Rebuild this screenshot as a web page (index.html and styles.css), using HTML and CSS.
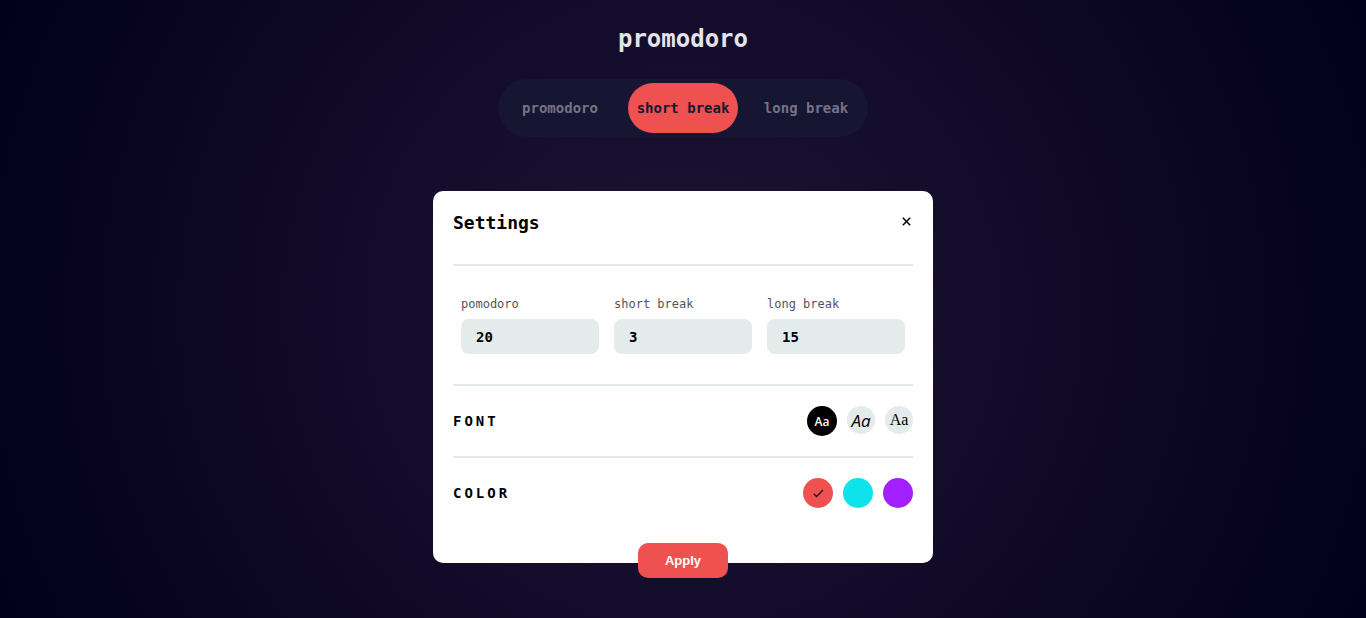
FILE: index.html
```html
<!DOCTYPE html>
<html lang="en">
<head>
<meta charset="utf-8">
<meta name="viewport" content="width=device-width, initial-scale=1">
<title>promodoro</title>
<link rel="stylesheet" href="styles.css">
</head>
<body>
<header class="header">
  <h1 class="brand">promodoro</h1>
  <nav class="tabs" aria-label="Timer mode">
    <button class="tab" type="button">promodoro</button>
    <button class="tab tab-active" type="button">short break</button>
    <button class="tab" type="button">long break</button>
  </nav>
</header>
<main>
  <form class="settings">
    <div class="settings-head">
      <h2 class="settings-title">Settings</h2>
      <button class="close" type="button" aria-label="Close">
        <svg width="9" height="9" viewBox="0 0 9 9" aria-hidden="true"><path d="M.8 .8l7.4 7.4M8.2 .8l-7.4 7.4" fill="none" stroke="#000" stroke-width="1.5"/></svg>
      </button>
    </div>
    <div class="times">
      <div class="field"><label for="pomodoro">pomodoro</label><input id="pomodoro" type="text" inputmode="numeric" value="20"></div>
      <div class="field"><label for="short">short break</label><input id="short" type="text" inputmode="numeric" value="3"></div>
      <div class="field"><label for="long">long break</label><input id="long" type="text" inputmode="numeric" value="15"></div>
    </div>
    <div class="row">
      <h3 class="row-title">FONT</h3>
      <div class="choices">
        <button class="font font-sans" type="button">Aa</button>
        <button class="font font-casual" type="button">Aa</button>
        <button class="font font-serif" type="button">Aa</button>
      </div>
    </div>
    <div class="row">
      <h3 class="row-title">COLOR</h3>
      <div class="choices">
        <button class="swatch red" type="button" aria-label="Red">
          <svg width="12" height="10" viewBox="0 0 12 10" aria-hidden="true"><path d="M1.8 5.8L4.5 8.5L11 2" fill="none" stroke="#1a1020" stroke-width="1.3"/></svg>
        </button>
        <button class="swatch cyan" type="button" aria-label="Cyan"></button>
        <button class="swatch purple" type="button" aria-label="Purple"></button>
      </div>
    </div>
    <button class="apply" type="submit">Apply</button>
  </form>
</main>
</body>
</html>
```
FILE: styles.css
```css
* {
  box-sizing: border-box;
}

body {
  margin: 0;
  min-height: 100vh;
  padding: 24px 16px 40px;
  background: radial-gradient(circle, #1f1435, #02001a);
  font-family: "DejaVu Sans Mono", monospace;
  color: #000;
}

h1,
h2,
h3 {
  margin: 0;
}

button {
  border: 0;
  padding: 0;
  font-family: inherit;
  cursor: pointer;
}

.header {
  display: flex;
  flex-direction: column;
  align-items: center;
  gap: 25px;
}

.brand {
  font-size: 24px;
  line-height: 30px;
  color: #e6e3ea;
}

.tabs {
  display: flex;
  gap: 13px;
  padding: 4px 7px;
  border-radius: 29px;
  background: #161532;
}

.tab {
  min-width: 110px;
  height: 50px;
  border-radius: 25px;
  background: transparent;
  color: #757386;
  font-size: 14px;
  font-weight: bold;
}

.tab-active {
  background: #ef5050;
  color: #161932;
}

.settings {
  display: flex;
  flex-direction: column;
  max-width: 500px;
  margin: 54px auto 0;
  padding: 0 20px;
  border-radius: 10px;
  background: #fff;
}

.settings-head {
  display: flex;
  justify-content: space-between;
  padding: 20px 0 29px;
  border-bottom: 2px solid #e3ebea;
}

.settings-title {
  font-size: 18px;
  line-height: 24px;
}

.close {
  display: grid;
  place-items: center;
  width: 13px;
  height: 20px;
  background: transparent;
}

.times {
  display: grid;
  grid-template-columns: repeat(3, 1fr);
  gap: 15px;
  padding: 30px 8px;
  border-bottom: 2px solid #e3ebea;
}

.field label {
  display: block;
  margin-bottom: 7px;
  font-size: 12px;
  line-height: 16px;
  color: #555;
}

.field input {
  display: block;
  width: 100%;
  height: 35px;
  border: 0;
  border-radius: 8px;
  padding: 0 15px;
  background: #e3ecea;
  color: #000;
  font: bold 14px "DejaVu Sans Mono", monospace;
}

.row {
  display: flex;
  justify-content: space-between;
  align-items: center;
  padding: 20px 0;
}

.row + .row {
  border-top: 2px solid #e3ebea;
}

.row-title {
  font-size: 14px;
  letter-spacing: 3px;
}

.choices {
  display: flex;
  gap: 10px;
}

.font {
  width: 28px;
  height: 28px;
  border-radius: 50%;
  background: #e3ecea;
  color: #000;
  font-size: 16px;
}

.font-sans {
  width: 30px;
  height: 30px;
  background: #000;
  color: #fff;
  font: 600 12px "Open Sans", sans-serif;
}

.font-casual {
  font-family: "Comic Sans MS", "Open Sans", sans-serif;
  font-size: 17px;
  font-style: italic;
}

.font-serif {
  font-family: "Liberation Serif", serif;
}

.swatch {
  display: grid;
  place-items: center;
  width: 30px;
  height: 30px;
  border-radius: 50%;
}

.red {
  background: #ef5050;
}

.cyan {
  background: #0ee3ec;
}

.purple {
  background: #a31fff;
}

.apply {
  align-self: center;
  width: 90px;
  height: 35px;
  margin: 15px 0 -15px;
  border-radius: 10px;
  background: #ef5050;
  color: #fff;
  font: bold 13px "Liberation Sans", Arial, sans-serif;
}
```
